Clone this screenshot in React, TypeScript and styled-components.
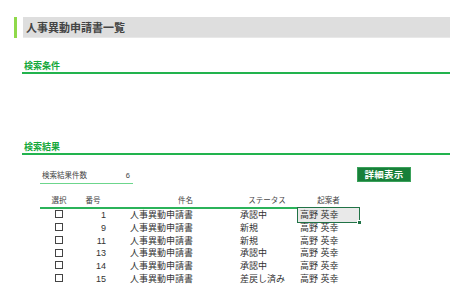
import React from "react";
import styled, { createGlobalStyle } from "styled-components";

const GlobalStyle = createGlobalStyle`
  html, body {
    margin: 0;
    padding: 0;
    background: #ffffff;
  }
  body {
    font-family: "Liberation Sans", "Noto Sans CJK JP", sans-serif;
    color: #333333;
    width: 450px;
    height: 300px;
    overflow: hidden;
  }
`;

const Page = styled.div`
  display: flex;
  flex-direction: column;
  padding-top: 17px;
`;

const TitleRow = styled.div`
  display: flex;
  align-items: stretch;
  height: 21px;
  padding-left: 14px;
  gap: 6px;
`;

const TitleAccent = styled.div`
  width: 3px;
  background: #8fd94a;
`;

const TitleBar = styled.div`
  flex: 1;
  display: flex;
  align-items: center;
  padding-left: 3px;
  background: #dedede;
  border-bottom: 1px solid #e8e8e8;
  font-size: 11px;
  font-weight: bold;
  color: #444444;
`;

const SectionHeading = styled.div<{ $top: number }>`
  margin-top: ${(p) => p.$top}px;
  margin-left: 22px;
  padding-left: 2px;
  height: 11px;
  line-height: 11px;
  font-size: 9px;
  font-weight: bold;
  color: #16a83c;
  border-bottom: 2px solid #22b34e;
`;

const SummaryRow = styled.div`
  display: flex;
  align-items: flex-start;
  justify-content: space-between;
  margin-top: 12px;
  padding-left: 40px;
  padding-right: 39px;
`;

const CountBox = styled.div`
  display: flex;
  justify-content: space-between;
  width: 88px;
  height: 14px;
  padding: 2px 3px 0 2px;
  font-size: 7.5px;
  line-height: 14px;
  border-bottom: 1.5px solid #6cd68c;
  color: #444444;
`;

const DetailButton = styled.button`
  width: 54px;
  height: 15px;
  padding: 0;
  background: #18803a;
  border: 1px solid #3aa15a;
  color: #ffffff;
  font-family: "Noto Sans CJK JP", sans-serif;
  font-size: 9.5px;
  font-weight: bold;
  line-height: 13px;
  letter-spacing: 0.3px;
`;

const Grid = styled.div`
  display: grid;
  grid-template-columns: 38px 30px 88px 40px 62px 61px;
  margin-top: 11px;
  margin-left: 40px;
  font-size: 9px;
  color: #333333;
`;

const HeadCell = styled.div<{ $align: string; $pad?: number; $noLine?: boolean }>`
  height: 12px;
  line-height: 12px;
  font-size: 7.5px;
  text-align: ${(p) => p.$align};
  padding-right: ${(p) => p.$pad ?? 0}px;
  border-bottom: 2px solid ${(p) => (p.$noLine ? "transparent" : "#2bb35a")};
  color: #444444;
`;

const Cell = styled.div<{ $align: string; $padL?: number; $padR?: number }>`
  position: relative;
  height: 12.8px;
  line-height: 12.8px;
  text-align: ${(p) => p.$align};
  padding-left: ${(p) => p.$padL ?? 0}px;
  padding-right: ${(p) => p.$padR ?? 0}px;
  white-space: nowrap;
`;

const SelectedCell = styled(Cell)`
  background: #e9e9e9;
  outline: 1px solid #217346;
  outline-offset: 0px;
  margin-top: -1px;
  height: 13.8px;
  line-height: 14.8px;
`;

const FillHandle = styled.span`
  position: absolute;
  right: -3px;
  bottom: -3px;
  width: 3px;
  height: 3px;
  background: #217346;
  border: 1px solid #ffffff;
`;

const CheckBox = styled.span`
  display: inline-block;
  width: 6px;
  height: 6px;
  border: 1px solid #444444;
  vertical-align: middle;
  margin-top: -3px;
`;

type Row = { no: number; name: string; status: string; author: string };

const rows: Row[] = [
  { no: 1, name: "人事異動申請書", status: "承認中", author: "高野 英幸" },
  { no: 9, name: "人事異動申請書", status: "新規", author: "高野 英幸" },
  { no: 11, name: "人事異動申請書", status: "新規", author: "高野 英幸" },
  { no: 13, name: "人事異動申請書", status: "承認中", author: "高野 英幸" },
  { no: 14, name: "人事異動申請書", status: "承認中", author: "高野 英幸" },
  { no: 15, name: "人事異動申請書", status: "差戻し済み", author: "高野 英幸" },
];

const App: React.FC = () => {
  return (
    <>
      <GlobalStyle />
      <Page>
        <TitleRow>
          <TitleAccent />
          <TitleBar>人事異動申請書一覧</TitleBar>
        </TitleRow>

        <SectionHeading $top={23}>検索条件</SectionHeading>
        <SectionHeading $top={68}>検索結果</SectionHeading>

        <SummaryRow>
          <CountBox>
            <span>検索結果件数</span>
            <span>6</span>
          </CountBox>
          <DetailButton>詳細表示</DetailButton>
        </SummaryRow>

        <Grid>
          <HeadCell $align="center">選択</HeadCell>
          <HeadCell $align="center">番号</HeadCell>
          <HeadCell $align="right" $pad={3}>件名</HeadCell>
          <HeadCell $align="center" />
          <HeadCell $align="center">ステータス</HeadCell>
          <HeadCell $align="center" $noLine>起案者</HeadCell>

          {rows.map((r, i) => {
            const Author = i === 0 ? SelectedCell : Cell;
            return (
              <React.Fragment key={r.no}>
                <Cell $align="center">
                  <CheckBox />
                </Cell>
                <Cell $align="right" $padR={2}>
                  {r.no}
                </Cell>
                <Cell $align="right" $padR={3}>
                  {r.name}
                </Cell>
                <Cell $align="left" />
                <Cell $align="left" $padL={4}>
                  {r.status}
                </Cell>
                <Author $align="left" $padL={2}>
                  {r.author}
                  {i === 0 && <FillHandle />}
                </Author>
              </React.Fragment>
            );
          })}
        </Grid>
      </Page>
    </>
  );
};

export default App;
